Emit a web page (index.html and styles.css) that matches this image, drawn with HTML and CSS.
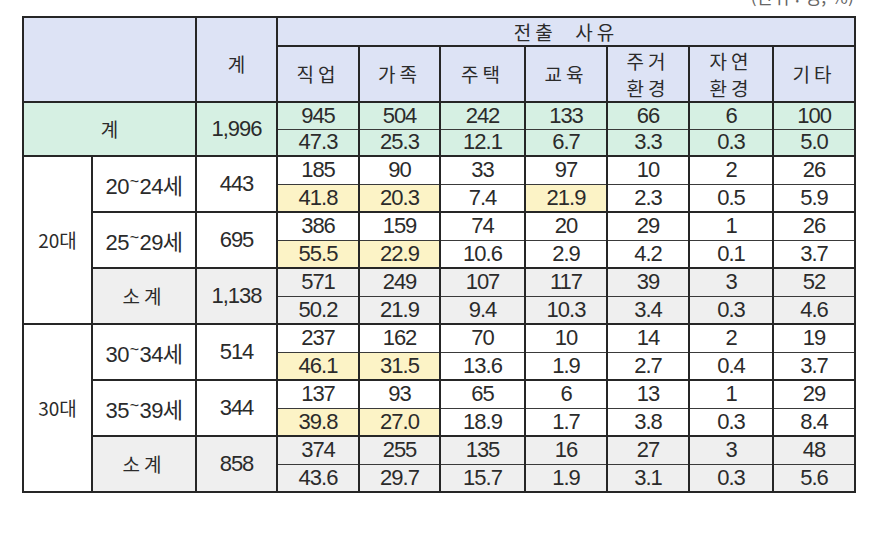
FILE: index.html
```html
<!DOCTYPE html>
<html lang="ko">
<head>
<meta charset="utf-8">
<title>전출 사유</title>
<link rel="stylesheet" href="styles.css">
</head>
<body>
<div class="page">
  <div class="unit">(단위 : 명, %)</div>
  <table class="tbl">
    <colgroup>
      <col class="c-age"><col class="c-sub"><col class="c-tot">
      <col class="c-d1"><col class="c-d2"><col class="c-d3"><col class="c-d4"><col class="c-d5"><col class="c-d6"><col class="c-d7">
    </colgroup>
    <thead>
      <tr class="h1">
        <th class="hd" colspan="2" rowspan="2"></th>
        <th class="hd ko top" rowspan="2">계</th>
        <th class="hd ko sp thin-b" colspan="7">전출&nbsp; 사유</th>
      </tr>
      <tr class="h2">
        <th class="hd ko sp">직업</th>
        <th class="hd ko sp">가족</th>
        <th class="hd ko sp">주택</th>
        <th class="hd ko sp">교육</th>
        <th class="hd ko sp two">주거<br>환경</th>
        <th class="hd ko sp two">자연<br>환경</th>
        <th class="hd ko sp">기타</th>
      </tr>
    </thead>
    <tbody>
      <tr class="r27 a">
        <td class="tot-row ko" colspan="2" rowspan="2">계</td>
        <td class="tot-row" rowspan="2">1,996</td>
        <td class="tot-row">945</td><td class="tot-row">504</td><td class="tot-row">242</td><td class="tot-row">133</td><td class="tot-row">66</td><td class="tot-row">6</td><td class="tot-row">100</td>
      </tr>
      <tr class="r27 b">
        <td class="tot-row">47.3</td><td class="tot-row">25.3</td><td class="tot-row">12.1</td><td class="tot-row">6.7</td><td class="tot-row">3.3</td><td class="tot-row">0.3</td><td class="tot-row">5.0</td>
      </tr>

      <tr class="a">
        <td class="ko" rowspan="6">20대</td>
        <td class="age" rowspan="2">20<span class="tl">~</span>24세</td>
        <td rowspan="2">443</td>
        <td>185</td><td>90</td><td>33</td><td>97</td><td>10</td><td>2</td><td>26</td>
      </tr>
      <tr class="b">
        <td class="hl">41.8</td><td class="hl">20.3</td><td>7.4</td><td class="hl">21.9</td><td>2.3</td><td>0.5</td><td>5.9</td>
      </tr>
      <tr class="a">
        <td class="age" rowspan="2">25<span class="tl">~</span>29세</td>
        <td rowspan="2">695</td>
        <td>386</td><td>159</td><td>74</td><td>20</td><td>29</td><td>1</td><td>26</td>
      </tr>
      <tr class="b">
        <td class="hl">55.5</td><td class="hl">22.9</td><td>10.6</td><td>2.9</td><td>4.2</td><td>0.1</td><td>3.7</td>
      </tr>
      <tr class="a sub">
        <td class="ko sp" rowspan="2">소계</td>
        <td rowspan="2">1,138</td>
        <td>571</td><td>249</td><td>107</td><td>117</td><td>39</td><td>3</td><td>52</td>
      </tr>
      <tr class="b sub">
        <td>50.2</td><td>21.9</td><td>9.4</td><td>10.3</td><td>3.4</td><td>0.3</td><td>4.6</td>
      </tr>

      <tr class="a">
        <td class="ko" rowspan="6">30대</td>
        <td class="age" rowspan="2">30<span class="tl">~</span>34세</td>
        <td rowspan="2">514</td>
        <td>237</td><td>162</td><td>70</td><td>10</td><td>14</td><td>2</td><td>19</td>
      </tr>
      <tr class="b">
        <td class="hl">46.1</td><td class="hl">31.5</td><td>13.6</td><td>1.9</td><td>2.7</td><td>0.4</td><td>3.7</td>
      </tr>
      <tr class="a">
        <td class="age" rowspan="2">35<span class="tl">~</span>39세</td>
        <td rowspan="2">344</td>
        <td>137</td><td>93</td><td>65</td><td>6</td><td>13</td><td>1</td><td>29</td>
      </tr>
      <tr class="b">
        <td class="hl">39.8</td><td class="hl">27.0</td><td>18.9</td><td>1.7</td><td>3.8</td><td>0.3</td><td>8.4</td>
      </tr>
      <tr class="a sub">
        <td class="ko sp" rowspan="2">소계</td>
        <td rowspan="2">858</td>
        <td>374</td><td>255</td><td>135</td><td>16</td><td>27</td><td>3</td><td>48</td>
      </tr>
      <tr class="b sub">
        <td>43.6</td><td>29.7</td><td>15.7</td><td>1.9</td><td>3.1</td><td>0.3</td><td>5.6</td>
      </tr>
    </tbody>
  </table>
</div>
</body>
</html>
```

FILE: styles.css
```css
html, body {
  margin: 0;
  padding: 0;
  background: #ffffff;
}

.page {
  width: 879px;
  height: 536px;
  overflow: hidden;
  padding-left: 22px;
  box-sizing: border-box;
  font-family: "Liberation Sans", "Noto Sans CJK KR", sans-serif;
  color: #2b2b2b;
}

.unit {
  width: 832px;
  height: 20px;
  line-height: 20px;
  margin-top: -14px;
  margin-bottom: 10px;
  text-align: right;
  font-size: 18px;
  font-family: "Noto Sans CJK KR", sans-serif;
  color: #666;
}

.tbl {
  width: 832px;
  table-layout: fixed;
  border-collapse: collapse;
  font-size: 22px;
  letter-spacing: -1px;
}

.c-age { width: 69px; }
.c-sub { width: 104px; }
.c-tot { width: 81px; }
.c-d1 { width: 82px; }
.c-d2 { width: 81px; }
.c-d3 { width: 85px; }
.c-d4 { width: 82px; }
.c-d5 { width: 82px; }
.c-d6 { width: 84px; }
.c-d7 { width: 82px; }

.tbl th,
.tbl td {
  border: 2px solid #262626;
  padding: 0;
  text-align: center;
  vertical-align: middle;
  font-weight: normal;
  line-height: 22px;
}

.h1 { height: 29px; }
.h2 { height: 56px; }
.tbl tbody tr { height: 28px; }
.tbl tbody tr.r27 { height: 27px; }

.hd {
  background: #dde3f5;
}

.ko {
  font-family: "Noto Sans CJK KR", sans-serif;
  font-size: 19px;
  letter-spacing: 0;
}

.sp { letter-spacing: 4px; }

.two { line-height: 27px !important; }

.top { padding-top: 8px !important; }

.thin-b { border-bottom-width: 1px !important; }

.tbl tr.a td { border-bottom-width: 1px; border-bottom-color: #3a3a3a; }
.tbl tr.a td[rowspan] { border-bottom-width: 2px; border-bottom-color: #262626; }
.tbl tr.b td { border-top-width: 1px; border-top-color: #3a3a3a; }

.tot-row { background: #d6f0e3; }
.hl { background: #fcf3c6; }
.sub td { background: #efefef; }

.age { letter-spacing: -0.6px; }
.age .tl {
  display: inline-block;
  font-size: 16px;
  vertical-align: 7px;
  margin: 0 1px;
}
```
